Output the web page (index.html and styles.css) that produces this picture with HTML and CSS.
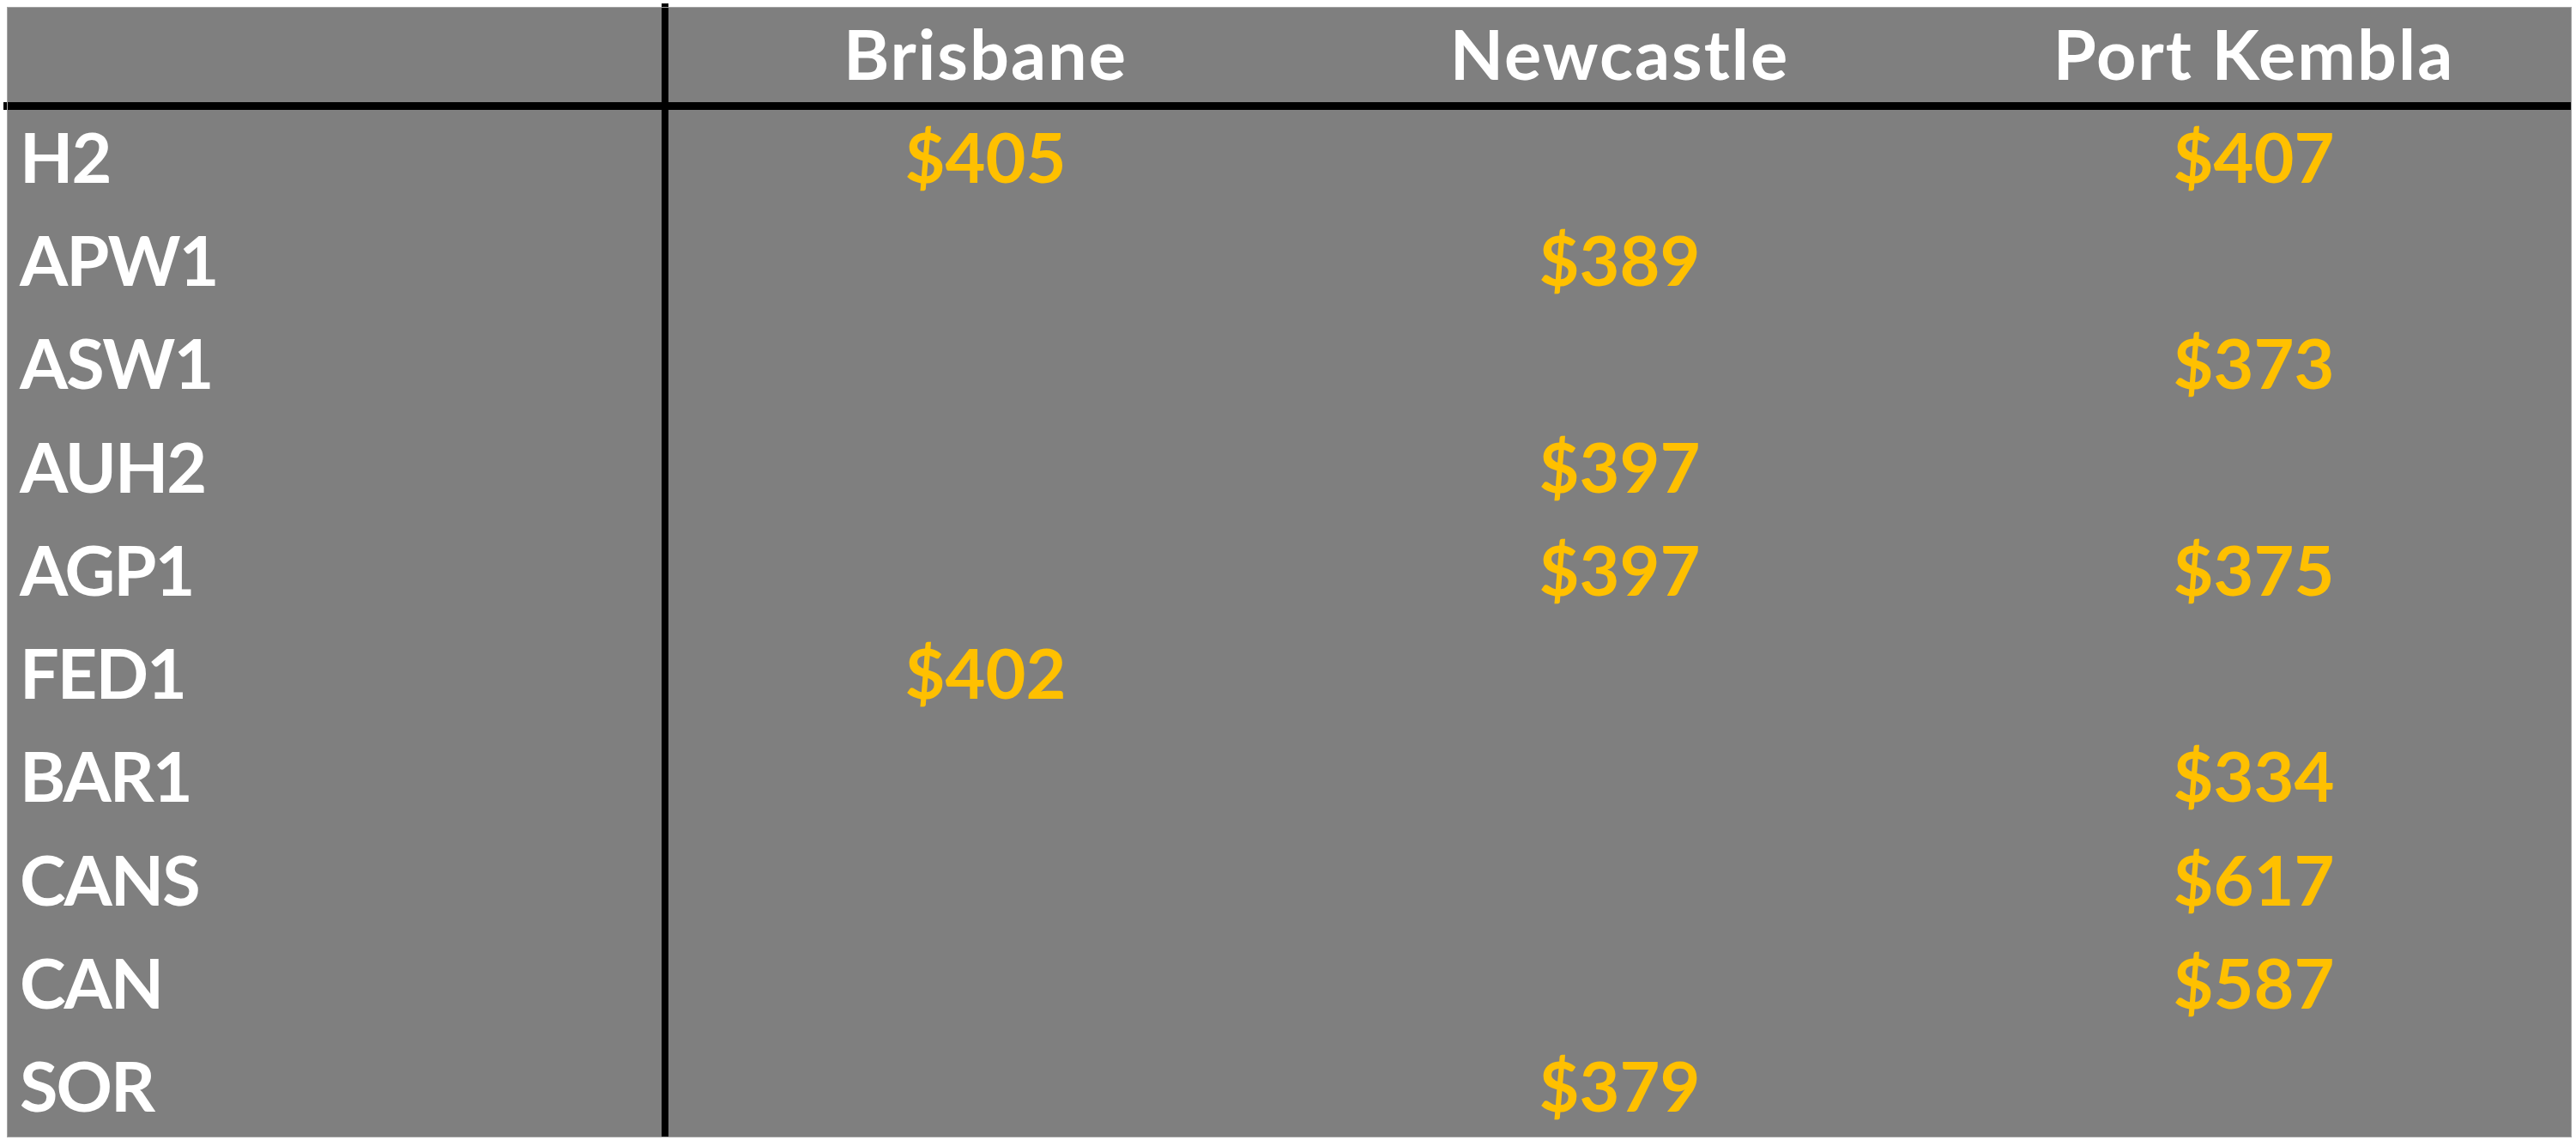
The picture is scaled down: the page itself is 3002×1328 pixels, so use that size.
FILE: index.html
```html
<!DOCTYPE html>
<html>
<head>
<meta charset="utf-8">
<link rel="stylesheet" href="styles.css">
</head>
<body>
<div class="sheet">
  <div class="cell head corner"></div>
  <div class="cell head">Brisbane</div>
  <div class="cell head">Newcastle</div>
  <div class="cell head">Port Kembla</div>

  <div class="cell label">H2</div>
  <div class="cell val">$405</div>
  <div class="cell val"></div>
  <div class="cell val">$407</div>

  <div class="cell label">APW1</div>
  <div class="cell val"></div>
  <div class="cell val">$389</div>
  <div class="cell val"></div>

  <div class="cell label">ASW1</div>
  <div class="cell val"></div>
  <div class="cell val"></div>
  <div class="cell val">$373</div>

  <div class="cell label">AUH2</div>
  <div class="cell val"></div>
  <div class="cell val">$397</div>
  <div class="cell val"></div>

  <div class="cell label">AGP1</div>
  <div class="cell val"></div>
  <div class="cell val">$397</div>
  <div class="cell val">$375</div>

  <div class="cell label">FED1</div>
  <div class="cell val">$402</div>
  <div class="cell val"></div>
  <div class="cell val"></div>

  <div class="cell label">BAR1</div>
  <div class="cell val"></div>
  <div class="cell val"></div>
  <div class="cell val">$334</div>

  <div class="cell label">CANS</div>
  <div class="cell val"></div>
  <div class="cell val"></div>
  <div class="cell val">$617</div>

  <div class="cell label">CAN</div>
  <div class="cell val"></div>
  <div class="cell val"></div>
  <div class="cell val">$587</div>

  <div class="cell label">SOR</div>
  <div class="cell val"></div>
  <div class="cell val">$379</div>
  <div class="cell val"></div>
</div>
</body>
</html>
```

FILE: styles.css
```css
html, body {
  margin: 0;
  padding: 0;
  background: #ffffff;
}

body {
  padding: 8px;
  font-family: "Lato", "Liberation Sans", sans-serif;
  font-weight: 700;
}

.sheet {
  width: 2989px;
  height: 1317px;
  box-sizing: border-box;
  background: #7f7f7f;
  border: 1px solid #a3a3a3;
  display: grid;
  grid-template-columns: 770px 1fr 1fr 1fr;
  grid-template-rows: 112px repeat(10, 1fr);
}

.cell {
  display: flex;
  align-items: center;
  font-size: 81px;
  line-height: 1;
  white-space: nowrap;
  box-sizing: border-box;
}

.head {
  justify-content: center;
  color: #ffffff;
  letter-spacing: 2px;
  border-bottom: 9px solid #000000;
  margin-bottom: -7px;
  padding-bottom: 6px;
  position: relative;
  z-index: 1;
}

.corner {
  border-right: 8px solid #000000;
}

.corner::before {
  content: "";
  position: absolute;
  top: -5px;
  right: -8px;
  width: 8px;
  height: 4px;
  background: #000000;
}

.corner::after {
  content: "";
  position: absolute;
  left: -5px;
  bottom: -9px;
  width: 4px;
  height: 9px;
  background: #000000;
}

.label {
  color: #ffffff;
  letter-spacing: -2px;
  padding-left: 14px;
  border-right: 8px solid #000000;
}

.val {
  justify-content: center;
  color: #ffc000;
}
```
